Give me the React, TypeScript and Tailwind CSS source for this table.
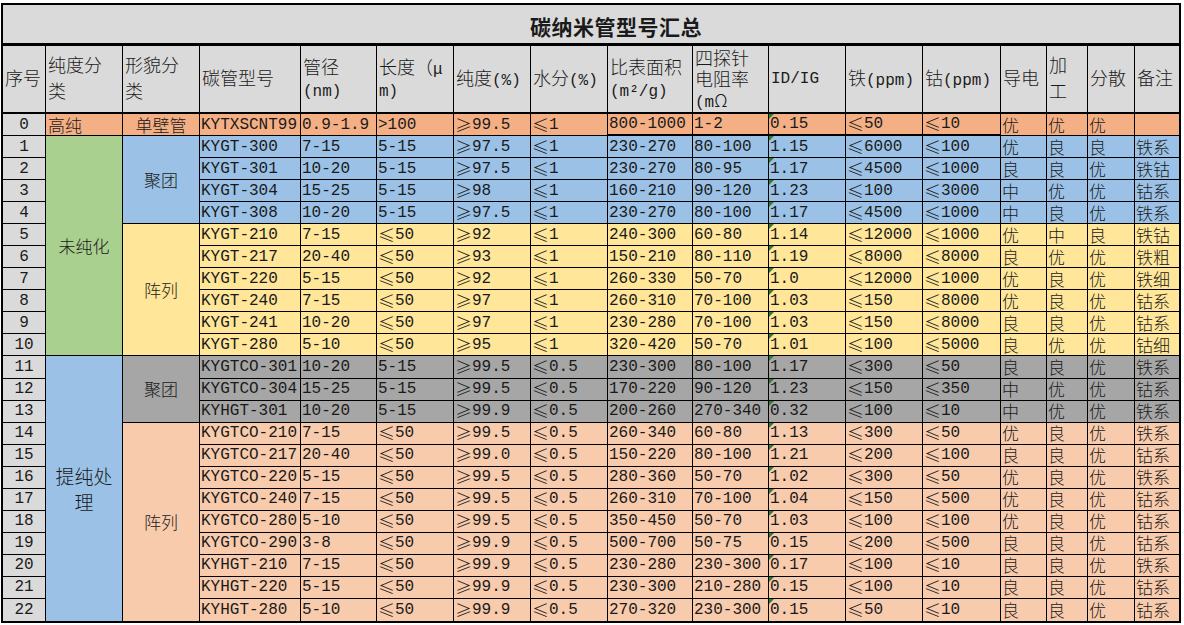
import type { ReactNode } from "react";

const CJK_DATA = "font-['Noto_Sans_CJK_SC',sans-serif] text-[17px] font-light";
const CJK_HEAD = "font-['Noto_Sans_CJK_SC',sans-serif] text-[18px] font-light";

const C = {
  gray: "bg-[#DADADA]",
  orange: "bg-[#F4B084]",
  blue: "bg-[#9BC2E6]",
  yellow: "bg-[#FFE699]",
  green: "bg-[#A9D08E]",
  dark: "bg-[#A6A6A6]",
  peach: "bg-[#F8CBAD]",
};

// split text so CJK runs use the CJK font, latin stays monospace
function Txt({ s, cjk }: { s: string; cjk: string }) {
  const parts = s.split(/([\u2264\u2265\u03a9\u3000-\u9fff\uff00-\uffef]+)/);
  return <>{parts.map((p, i) => (i % 2 ? <span key={i} className={cjk}>{p}</span> : p))}</>;
}

const HEAD: string[][] = [
  ["序号"],
  ["纯度分", "类"],
  ["形貌分", "类"],
  ["碳管型号"],
  ["管径", "(nm)"],
  ["长度（μ", "m)"],
  ["纯度(%)"],
  ["水分(%)"],
  ["比表面积", "(m²/g)"],
  ["四探针", "电阻率", "(mΩ"],
  ["ID/IG"],
  ["铁(ppm)"],
  ["钴(ppm)"],
  ["导电"],
  ["加", "工"],
  ["分散"],
  ["备注"],
];

// model, diameter, length, purity, water, surface, resistivity, id/ig, fe, co, cond, proc, disp, note
const ROWS: string[][] = [
  ["KYTXSCNT99", "0.9-1.9", ">100", "≥99.5", "≤1", "800-1000", "1-2", "0.15", "≤50", "≤10", "优", "优", "优", ""],
  ["KYGT-300", "7-15", "5-15", "≥97.5", "≤1", "230-270", "80-100", "1.15", "≤6000", "≤100", "优", "良", "良", "铁系"],
  ["KYGT-301", "10-20", "5-15", "≥97.5", "≤1", "230-270", "80-95", "1.17", "≤4500", "≤1000", "良", "良", "优", "铁钴"],
  ["KYGT-304", "15-25", "5-15", "≥98", "≤1", "160-210", "90-120", "1.23", "≤100", "≤3000", "中", "优", "优", "钴系"],
  ["KYGT-308", "10-20", "5-15", "≥97.5", "≤1", "230-270", "80-100", "1.17", "≤4500", "≤1000", "中", "良", "优", "铁系"],
  ["KYGT-210", "7-15", "≤50", "≥92", "≤1", "240-300", "60-80", "1.14", "≤12000", "≤1000", "优", "中", "良", "铁钴"],
  ["KYGT-217", "20-40", "≤50", "≥93", "≤1", "150-210", "80-110", "1.19", "≤8000", "≤8000", "良", "优", "优", "铁粗"],
  ["KYGT-220", "5-15", "≤50", "≥92", "≤1", "260-330", "50-70", "1.0", "≤12000", "≤1000", "优", "良", "优", "铁细"],
  ["KYGT-240", "7-15", "≤50", "≥97", "≤1", "260-310", "70-100", "1.03", "≤150", "≤8000", "优", "良", "优", "钴系"],
  ["KYGT-241", "10-20", "≤50", "≥97", "≤1", "230-280", "70-100", "1.03", "≤150", "≤8000", "良", "良", "优", "钴系"],
  ["KYGT-280", "5-10", "≤50", "≥95", "≤1", "320-420", "50-70", "1.01", "≤100", "≤5000", "良", "优", "优", "钴细"],
  ["KYGTCO-301", "10-20", "5-15", "≥99.5", "≤0.5", "230-300", "80-100", "1.17", "≤300", "≤50", "良", "良", "优", "铁系"],
  ["KYGTCO-304", "15-25", "5-15", "≥99.5", "≤0.5", "170-220", "90-120", "1.23", "≤150", "≤350", "中", "优", "优", "钴系"],
  ["KYHGT-301", "10-20", "5-15", "≥99.9", "≤0.5", "200-260", "270-340", "0.32", "≤100", "≤10", "中", "优", "优", "铁系"],
  ["KYGTCO-210", "7-15", "≤50", "≥99.5", "≤0.5", "260-340", "60-80", "1.13", "≤300", "≤50", "优", "良", "优", "铁系"],
  ["KYGTCO-217", "20-40", "≤50", "≥99.0", "≤0.5", "150-220", "80-100", "1.21", "≤200", "≤100", "良", "良", "优", "钴系"],
  ["KYGTCO-220", "5-15", "≤50", "≥99.5", "≤0.5", "280-360", "50-70", "1.02", "≤300", "≤50", "优", "良", "优", "铁系"],
  ["KYGTCO-240", "7-15", "≤50", "≥99.5", "≤0.5", "260-310", "70-100", "1.04", "≤150", "≤500", "优", "良", "优", "钴系"],
  ["KYGTCO-280", "5-10", "≤50", "≥99.5", "≤0.5", "350-450", "50-70", "1.03", "≤100", "≤100", "优", "良", "优", "钴系"],
  ["KYGTCO-290", "3-8", "≤50", "≥99.9", "≤0.5", "500-700", "50-75", "0.15", "≤200", "≤500", "良", "良", "优", "钴系"],
  ["KYHGT-210", "7-15", "≤50", "≥99.9", "≤0.5", "230-280", "230-300", "0.17", "≤100", "≤10", "良", "良", "优", "铁系"],
  ["KYHGT-220", "5-15", "≤50", "≥99.9", "≤0.5", "230-300", "210-280", "0.15", "≤100", "≤10", "良", "良", "优", "钴系"],
  ["KYHGT-280", "5-10", "≤50", "≥99.9", "≤0.5", "270-320", "230-300", "0.15", "≤50", "≤10", "良", "良", "优", "钴系"],
];

function rowColor(r: number) {
  if (r === 0) return C.orange;
  if (r <= 4) return C.blue;
  if (r <= 10) return C.yellow;
  if (r <= 13) return C.dark;
  return C.peach;
}

const GRID =
  "grid grid-cols-[43px_77px_77px_101px_76px_77px_77px_77px_85px_76px_77px_77px_78px_46px_41px_47px_44px]";

function Merged({ span, bg, children, last }: { span: string; bg: string; children: ReactNode; last?: boolean }) {
  return (
    <div
      className={`${span} ${bg} flex items-center justify-center border-r border-black text-center ${last ? "" : "border-b"}`}
    >
      {children}
    </div>
  );
}

export default function App() {
  const cells: ReactNode[] = [];
  ROWS.forEach((row, r) => {
    const last = r === ROWS.length - 1;
    const bb = last ? "" : "border-b";
    cells.push(
      <div key={`i${r}`} className={`${C.gray} flex items-center justify-center border-r border-black ${bb}`}>
        {r}
      </div>,
    );
    if (r === 0) {
      cells.push(
        <div key="p0" className={`${C.orange} flex items-center border-r border-b border-black pl-[2px]`}>
          <span className={CJK_DATA}>高纯</span>
        </div>,
        <div key="m0" className={`${C.orange} flex items-center justify-center border-r border-b border-black`}>
          <span className={CJK_DATA}>单壁管</span>
        </div>,
      );
    }
    if (r === 1)
      cells.push(
        <Merged key="p1" span="row-span-10" bg={C.green}>
          <span className={CJK_DATA}>未纯化</span>
        </Merged>,
      );
    if (r === 11)
      cells.push(
        <Merged key="p11" span="row-span-12" bg={C.blue} last>
          <div className="font-['Noto_Sans_CJK_SC',sans-serif] text-[19px] font-light leading-[26px]">
            提纯处
            <br />理
          </div>
        </Merged>,
      );
    if (r === 1)
      cells.push(
        <Merged key="m1" span="row-span-4" bg={C.blue}>
          <span className={CJK_DATA}>聚团</span>
        </Merged>,
      );
    if (r === 5)
      cells.push(
        <Merged key="m5" span="row-span-6" bg={C.yellow}>
          <span className={CJK_DATA}>阵列</span>
        </Merged>,
      );
    if (r === 11)
      cells.push(
        <Merged key="m11" span="row-span-3" bg={C.dark}>
          <span className={CJK_DATA}>聚团</span>
        </Merged>,
      );
    if (r === 14)
      cells.push(
        <Merged key="m14" span="row-span-9" bg={C.peach} last>
          <span className={CJK_DATA}>阵列</span>
        </Merged>,
      );
    row.forEach((v, c) => {
      const col = c + 3;
      const thick = r === 0 && col >= 8 && col <= 12;
      cells.push(
        <div
          key={`${r}-${c}`}
          className={`${rowColor(r)} relative flex items-center whitespace-nowrap border-black pl-[1px] ${
            col === 16 ? "" : "border-r"
          } ${thick ? "border-b-2" : bb}`}
        >
          {col === 10 && (
            <span className="absolute left-0 top-0 h-0 w-0 border-r-[5px] border-t-[5px] border-r-transparent border-t-[#2e7d32]" />
          )}
          <Txt s={v} cjk={CJK_DATA} />
        </div>,
      );
    });
  });

  return (
    <div className="h-[625px] w-[1184px] overflow-hidden bg-white pl-[1px] pt-[3px] font-['Liberation_Mono','Noto_Sans_CJK_SC',monospace] text-[16px] text-[#1a1a1a]">
      <div className="w-[1180px] border-2 border-black">
        <div className="flex h-[41px] items-center border-b-[3px] border-black bg-[#DADADA] pl-[527px] pt-[5px]">
          <span className="font-['Noto_Sans_CJK_SC',sans-serif] text-[21px] font-bold tracking-[0.5px]">
            碳纳米管型号汇总
          </span>
        </div>
        <div className={`${GRID} h-[68px] border-b-2 border-black bg-[#DADADA]`}>
          {HEAD.map((lines, i) => {
            const tall = lines.length > 2;
            return (
              <div
                key={i}
                className={`flex flex-col overflow-hidden whitespace-nowrap pl-[2px] leading-[22px] ${
                  tall ? "justify-start pt-[2px]" : "justify-center"
                } ${i === 16 ? "" : "border-r border-black"}`}
              >
                {lines.map((l, j) => (
                  <div key={j} className={tall ? "flex h-[21px] shrink-0 items-center" : "shrink-0"}>
                    <span>
                      <Txt s={l} cjk={CJK_HEAD} />
                    </span>
                  </div>
                ))}
              </div>
            );
          })}
        </div>
        <div className={`${GRID} h-[507px] grid-rows-[repeat(23,1fr)] leading-[20px]`}>{cells}</div>
      </div>
    </div>
  );
}
